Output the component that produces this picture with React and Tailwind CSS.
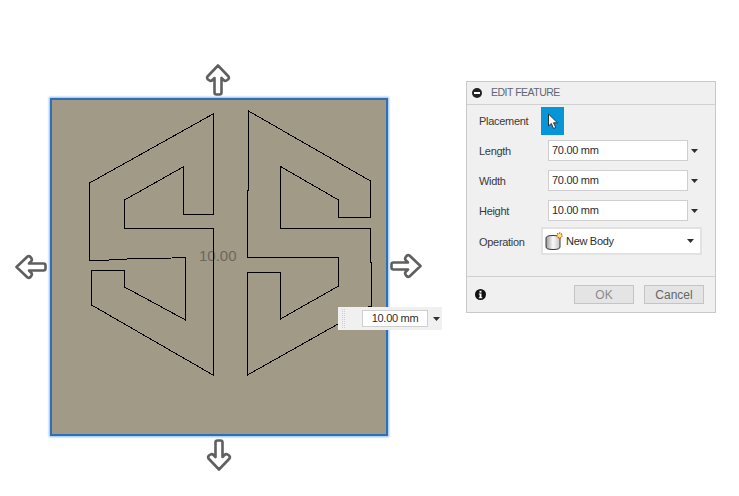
const SKETCH_PATHS = [
  'M213 114V214H183V167L124.500 200V228H213V375L91.500 305V270H124.500V287L185.500 320V257.500L172 258L136 258.500L100 260.500H89.500V183L213 114Z',
  'M248.500 111L370.500 181V217H338.500V200L280.500 166.500V228H370.500V262L371.500 263V306H370L247.500 375V272H280.500V319L338.500 286V257H247.500V191L248.500 190V111Z',
]

const FIELDS = [
  { label: 'Length', value: '70.00 mm' },
  { label: 'Width', value: '70.00 mm' },
  { label: 'Height', value: '10.00 mm' },
]

function Caret({ className = '' }) {
  return (
    <svg width="7" height="4" viewBox="0 0 7 4" className={className}>
      <path d="M0 0H7L3.500 4Z" fill="#2f2f2f" />
    </svg>
  )
}

function Arrow({ rotate, className }) {
  return (
    <svg width="34" height="34" viewBox="0 0 34 34" className={`absolute ${rotate} ${className}`}>
      <path
        d="M17 2.500L27.500 13.500Q28.500 15 27 16.500L25.500 17.500Q24 18.500 22.500 17L20.500 15V29.500Q20.500 31.500 18.500 31.500H15.500Q13.500 31.500 13.500 29.500V15L11.500 17Q10 18.500 8.500 17.500L7 16.500Q5.500 15 6.500 13.500Z"
        fill="#fff"
        stroke="#5f5f5f"
        strokeWidth="2.600"
        strokeLinejoin="round"
      />
    </svg>
  )
}

function FieldRow({ label, value }) {
  return (
    <div className="flex h-[21px] items-center">
      <span className="w-[81px] shrink-0 pt-[2px] pl-[12px] leading-none">{label}</span>
      <div className="flex h-[21px] w-[140px] items-center border border-[#cfcfcf] bg-white pb-[1px] pl-[3px] text-[#2d2d2d]">
        {value}
      </div>
      <Caret className="ml-[3px]" />
    </div>
  )
}

export default function App() {
  return (
    <div className="relative h-[496px] w-[739px] overflow-hidden bg-white font-['Liberation_Sans',Arial,sans-serif] text-[11px] tracking-[-0.3px] text-[#3a3a3a]">
      {/* sketch face */}
      <div className="absolute top-[98px] left-[50px] h-[338px] w-[338px] border-2 border-[#2e6fb8] bg-[#a19a87] shadow-[0_0_2px_1px_#8dbcf2]" />
      <span className="absolute top-[247px] left-[199px] text-[15px] leading-[18px] tracking-normal text-[#6b685e]">10.00</span>
      <svg width="739" height="496" viewBox="0 0 739 496" className="absolute top-0 left-0" shapeRendering="crispEdges">
        {SKETCH_PATHS.map((d) => (
          <path key={d} d={d} fill="none" stroke="#000" strokeWidth="1" />
        ))}
      </svg>

      {/* drag arrows */}
      <Arrow rotate="" className="top-[63px] left-[201px]" />
      <Arrow rotate="rotate-180" className="top-[438px] left-[202px]" />
      <Arrow rotate="-rotate-90" className="top-[250px] left-[14px]" />
      <Arrow rotate="rotate-90" className="top-[249px] left-[389px]" />

      {/* distance input */}
      <div className="absolute top-[307px] left-[338px] flex h-[23px] w-[104px] items-center bg-[#f0f0f0]">
        <div className="ml-[4px] h-[19px] w-[3px] border-x border-dotted border-[#cfcfcf]" />
        <div className="ml-[17px] flex h-[17px] w-[66px] items-center justify-center border border-[#cfcfcf] bg-white text-[#2d2d2d]">
          10.00 mm
        </div>
        <Caret className="ml-[5px]" />
      </div>

      {/* edit feature panel */}
      <div className="absolute top-[81px] left-[466px] flex h-[232px] w-[250px] flex-col border border-[#c9c9c9] bg-[#f0f0f0]">
        <div className="flex h-[23px] shrink-0 items-center border-b border-[#d0d0d0] pl-[5px]">
          <span className="flex h-[10px] w-[10px] items-center justify-center rounded-full bg-[#222]">
            <span className="h-[2px] w-[6px] bg-white" />
          </span>
          <span className="ml-[9px] text-[10.500px] tracking-[-0.5px] text-[#5f6675]">EDIT FEATURE</span>
        </div>

        <div className="flex flex-1 flex-col">
          <div className="mt-[2px] flex h-[28px] items-center">
            <span className="w-[74px] pl-[12px]">Placement</span>
            <div className="flex h-[28px] w-[23px] items-center justify-center bg-[#0696d7]">
              <svg width="12" height="17" viewBox="0 0 12 17">
                <path d="M1.500 1V13L4.300 10.500L6.500 15.500L8.800 14.500L6.500 9.800H10.500Z" fill="#fff" stroke="#333" strokeWidth="1" />
              </svg>
            </div>
          </div>
          <div className="mt-[5px] flex flex-col gap-[9px]">
            {FIELDS.map((f) => (
              <FieldRow key={f.label} label={f.label} value={f.value} />
            ))}
          </div>
          <div className="mt-[6px] flex h-[28px] items-center">
            <span className="w-[74px] pt-[2px] pl-[12px]">Operation</span>
            <div className="flex h-[28px] w-[161px] items-center border-2 border-[#e2e2e2] bg-white pr-[6px] pl-[2px] text-[#2d2d2d]">
              <svg width="19" height="18" viewBox="0 0 19 18" className="shrink-0">
                <defs>
                  <linearGradient id="body" x1="0" x2="1" y1="0" y2="0">
                    <stop offset="0" stopColor="#9a9a9a" />
                    <stop offset="0.500" stopColor="#fafafa" />
                    <stop offset="1" stopColor="#c4c4c4" />
                  </linearGradient>
                </defs>
                <path d="M1 6Q1 3.500 8 3.500Q15 3.500 15 6V15Q15 17.500 8 17.500Q1 17.500 1 15Z" fill="url(#body)" stroke="#3a3a3a" />
                <circle cx="14.500" cy="3.500" r="2.500" fill="#fbe27a" stroke="#e8590c" strokeWidth="1.300" strokeDasharray="1.300 0.900" />
              </svg>
              <span className="ml-[2px]">New Body</span>
              <Caret className="ml-auto" />
            </div>
          </div>
        </div>

        <div className="flex h-[36px] shrink-0 items-center border-t border-[#cfcfcf] pr-[11px] pl-[8px]">
          <svg width="11" height="11" viewBox="0 0 11 11">
            <circle cx="5.500" cy="5.500" r="5.500" fill="#111" />
            <rect x="4.500" y="1.800" width="2" height="1.800" fill="#fff" />
            <path d="M3.800 4.500H6.500V8.200H7.300V9.200H3.800V8.200H4.600V5.400H3.800Z" fill="#fff" />
          </svg>
          <button className="ml-auto h-[19px] w-[60px] border border-[#c4c4c4] bg-[#e4e4e4] text-[12px] leading-none tracking-normal text-[#8b8b8b]">OK</button>
          <button className="ml-[10px] h-[19px] w-[60px] border border-[#c4c4c4] bg-[#e4e4e4] text-[12px] leading-none tracking-normal text-[#666]">Cancel</button>
        </div>
      </div>
    </div>
  )
}
